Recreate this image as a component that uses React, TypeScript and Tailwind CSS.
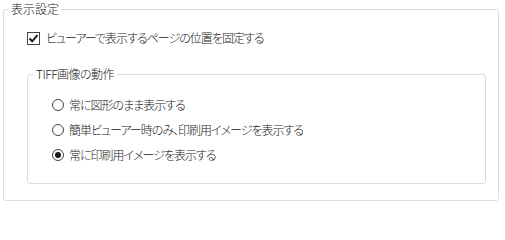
import React from 'react';

const font = "font-['Noto_Sans_CJK_JP','Noto_Sans',sans-serif] [font-feature-settings:'palt']";

function Radio({ checked, label }: { checked?: boolean; label: string }) {
  return (
    <div className="flex items-center gap-[5px] h-4">
      <svg width="12" height="12" viewBox="0 0 12 12" className="shrink-0">
        <circle cx="6" cy="6" r="5.5" fill="#fff" stroke="#444" strokeWidth="1" />
        {checked && <circle cx="6" cy="6" r="3" fill="#1a1a1a" />}
      </svg>
      <span className="leading-4 tracking-[-1px]">{label}</span>
    </div>
  );
}

export default function App() {
  return (
    <div className={`w-[505px] h-[205px] bg-white pt-[2px] pl-[3px] text-[12px] font-light text-[#222] ${font}`}>
      {/* 表示設定 */}
      <fieldset className="w-[496px] h-[199px] border border-[#dcdcdc] rounded-[3px]">
        <legend className="ml-[4px] px-[3px] leading-[14px]">表示設定</legend>

        <label className="flex items-center gap-[6px] ml-[23px] mt-[14px] h-4">
          <span className="w-[13px] h-[13px] border border-[#444] bg-white flex items-center justify-center shrink-0">
            <svg width="11" height="11" viewBox="0 0 11 11">
              <path d="M1.5 5.5 L4.2 8.3 L9.5 2.2" fill="none" stroke="#1a1a1a" strokeWidth="2" />
            </svg>
          </span>
          <span className="leading-4 tracking-[-1px]">ビューアーで表示するページの位置を固定する</span>
        </label>

        {/* TIFF画像の動作 */}
        <fieldset className="ml-[23px] mt-[21px] w-[459px] h-[117px] border border-[#dcdcdc] rounded-[3px]">
          <legend className="ml-[5px] px-[3px] leading-[14px] tracking-[-0.5px]">TIFF画像の動作</legend>
          <div className="flex flex-col gap-[9px] pl-[24px] mt-[16px]">
            <Radio label="常に図形のまま表示する" />
            <Radio label="簡単ビューアー時のみ、印刷用イメージを表示する" />
            <Radio checked label="常に印刷用イメージを表示する" />
          </div>
        </fieldset>
      </fieldset>
    </div>
  );
}
